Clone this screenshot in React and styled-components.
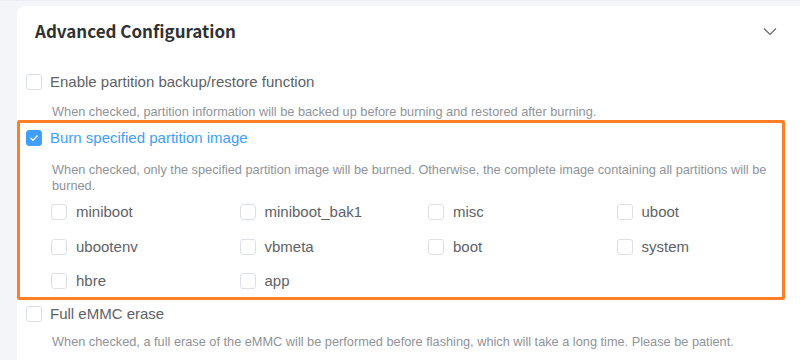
import styled, { createGlobalStyle } from "styled-components";

const GlobalStyle = createGlobalStyle`
    html, body {
        margin: 0;
        padding: 0;
        background: #f4f5f8;
        font-family: "Liberation Sans", Arial, sans-serif;
    }
`;

const Page = styled.div`
    padding: 5px 0 0 17px;
    height: 360px;
    box-sizing: border-box;
    overflow: hidden;
    border-top: 1px solid #eceef3;
`;

const Card = styled.div`
    background: #fff;
    border-top-left-radius: 8px;
    height: 100%;
`;

const Header = styled.div`
    display: flex;
    align-items: center;
    justify-content: space-between;
    padding: 13px 23px 0 18px;
    height: 24px;
`;

const Title = styled.h2`
    margin: 0;
    font-family: "Noto Sans CJK SC", "Noto Sans", sans-serif;
    font-weight: 700;
    font-size: 17px;
    line-height: 24px;
    color: #303133;
`;

const Options = styled.div`
    margin-top: 29px;
    width: 768px;
`;

const Option = styled.div`
    padding-left: ${(p) => (p.$highlight ? "6px" : "9px")};
    ${(p) =>
        p.$highlight &&
        `
        border: 3px solid #ff7f27;
        border-radius: 2px;
        padding-top: 5px;
        padding-bottom: 6px;
    `}
    margin-top: ${(p) => p.$gap ?? 0}px;
`;

const Row = styled.label`
    display: flex;
    align-items: center;
    gap: ${(p) => p.$gap ?? 8}px;
    height: 20px;
    font-size: 15px;
    line-height: 20px;
    color: ${(p) => (p.$checked ? "#409eff" : "#606266")};
`;

const Box = styled.span`
    width: 14px;
    height: 14px;
    flex: none;
    border: 1px solid ${(p) => (p.$checked ? "#409eff" : "#dcdfe6")};
    background: ${(p) => (p.$checked ? "#409eff" : "#fff")};
    border-radius: 3px;
    display: flex;
    align-items: center;
    justify-content: center;
`;

const Desc = styled.p`
    margin: ${(p) => p.$top ?? 12}px 0 0 26px;
    font-size: 12.75px;
    line-height: 16px;
    color: #909399;
    padding-right: 12px;
`;

const Grid = styled.div`
    display: grid;
    grid-template-columns: repeat(4, 188.5px);
    row-gap: 14.5px;
    margin: 8px 0 0 25px;
`;

const Check = ({ checked }) => (
    <Box $checked={checked}>
        {checked && (
            <svg width="10" height="8" viewBox="0 0 10 8">
                <polyline points="1.5,4 4,6.3 8.5,1.5" fill="none" stroke="#fff" strokeWidth="1.4" />
            </svg>
        )}
    </Box>
);

const Chevron = () => (
    <svg width="14" height="9" viewBox="0 0 14 9">
        <polyline points="1,1.5 7,7.5 13,1.5" fill="none" stroke="#606266" strokeWidth="1.1" />
    </svg>
);

const partitions = ["miniboot", "miniboot_bak1", "misc", "uboot", "ubootenv", "vbmeta", "boot", "system", "hbre", "app"];

export default function App() {
    return (
        <>
            <GlobalStyle />
            <Page>
                <Card>
                    <Header>
                        <Title>Advanced Configuration</Title>
                        <Chevron />
                    </Header>
                    <Options>
                        <Option>
                            <Row>
                                <Check />
                                Enable partition backup/restore function
                            </Row>
                            <Desc>
                                When checked, partition information will be backed up before burning and restored after burning.
                            </Desc>
                        </Option>
                        <Option $highlight>
                            <Row $checked>
                                <Check checked />
                                Burn specified partition image
                            </Row>
                            <Desc $top={14}>
                                When checked, only the specified partition image will be burned. Otherwise, the complete image containing all partitions will be burned.
                            </Desc>
                            <Grid>
                                {partitions.map((name) => (
                                    <Row key={name} $gap={9}>
                                        <Check />
                                        {name}
                                    </Row>
                                ))}
                            </Grid>
                        </Option>
                        <Option $gap={4}>
                            <Row>
                                <Check />
                                Full eMMC erase
                            </Row>
                            <Desc $top={10}>
                                When checked, a full erase of the eMMC will be performed before flashing, which will take a long time. Please be patient.
                            </Desc>
                        </Option>
                    </Options>
                </Card>
            </Page>
        </>
    );
}
